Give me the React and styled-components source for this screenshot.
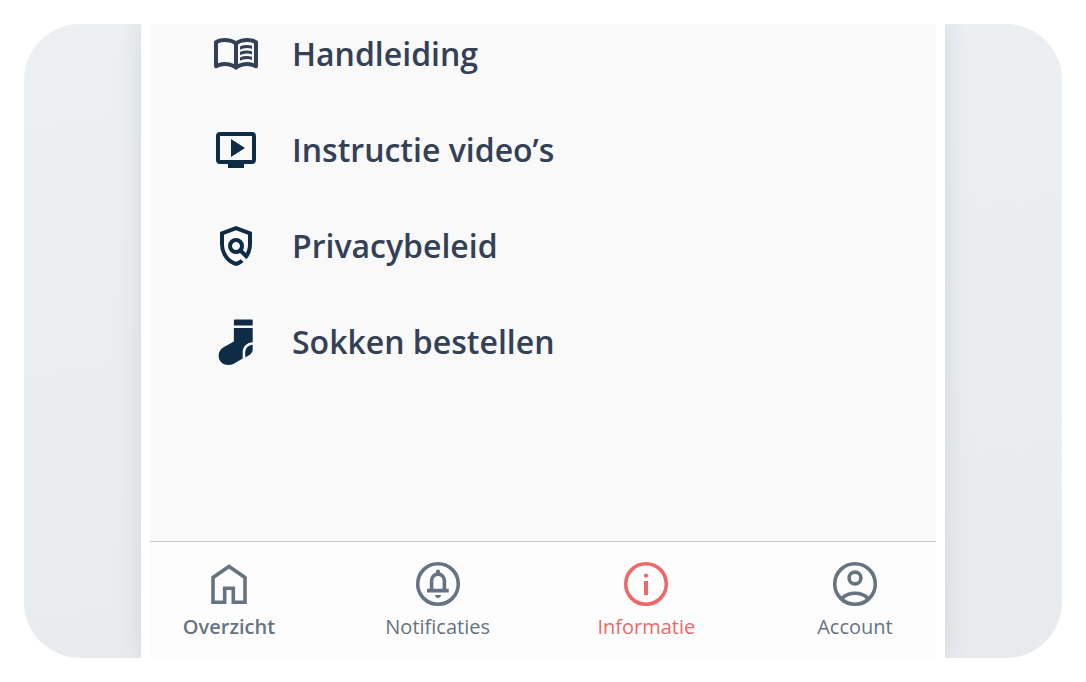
import React from 'react';
import styled, { createGlobalStyle } from 'styled-components'

const GlobalStyle = createGlobalStyle`
  * {
    box-sizing: border-box;
  }
  body {
    margin: 0;
    background: #ffffff;
    font-family: 'Open Sans', 'Noto Sans', sans-serif;
  }
`

const Page = styled.div`
  display: flex;
  min-height: 100vh;
  padding: 24px;
`

const Stage = styled.div`
  display: flex;
  flex: 1;
  padding: 0 117px;
  border-radius: 56px;
  overflow: hidden;
  background: linear-gradient(170deg, #ecf0f3, #e8ebee);
`

const Phone = styled.div`
  display: flex;
  flex-direction: column;
  flex: 1;
  padding: 0 9px;
  background: #ffffff;
  box-shadow: 0 0 24px rgba(60, 75, 90, 0.14);
`

const Menu = styled.main`
  display: flex;
  flex-direction: column;
  align-items: flex-start;
  gap: 48px;
  flex: 1;
  padding: 6px 62px;
  background: #f9f9f9;
`

const MenuLink = styled.a`
  display: flex;
  align-items: center;
  gap: 32px;
  color: #334056;
  font-size: 32px;
  font-weight: 600;
  line-height: 48px;
  text-decoration: none;
`

const TabBar = styled.nav`
  display: flex;
  justify-content: space-between;
  height: 117px;
  padding: 18px 25px 0 23px;
  border-top: 1px solid #c6c9cb;
  background: #fdfdfd;
`

const Tab = styled.a`
  display: flex;
  flex-direction: column;
  align-items: center;
  gap: 4px;
  width: 112px;
  color: ${props => props.$active ? '#ef6868' : '#667381'};
  font-size: 20px;
  font-weight: ${props => props.$strong ? 600 : 400};
  line-height: 30px;
  text-decoration: none;
`

const Icon = styled.svg`
  display: block;
  flex: none;
  width: 48px;
  height: 48px;
  fill: ${props => props.$outline ? 'none' : 'currentColor'};
  stroke: ${props => props.$outline ? 'currentColor' : 'none'};
  stroke-width: 3.6;
  color: ${props => props.$color || 'inherit'};
`

const navy = '#0f2c46'

const BookIcon = () => (
  <Icon viewBox="0 -960 960 960" aria-hidden="true">
    <path d="M560-564v-68q33-14 67.5-21t72.5-7q26 0 51 4t49 10v64q-24-9-48.5-13.5T700-600q-38 0-73 9.5T560-564Zm0 220v-68q33-14 67.5-21t72.5-7q26 0 51 4t49 10v64q-24-9-48.5-13.5T700-380q-38 0-73 9t-67 27Zm0-110v-68q33-14 67.5-21t72.5-7q26 0 51 4t49 10v64q-24-9-48.5-13.5T700-490q-38 0-73 9.5T560-454ZM260-320q47 0 91.5 10.5T440-278v-394q-41-24-87-36t-93-12q-36 0-71.5 7T120-692v396q35-12 69.5-18t70.5-6Zm260 42q44-21 88.5-31.5T700-320q36 0 70.5 6t69.5 18v-396q-33-14-68.5-21t-71.5-7q-47 0-93 12t-87 36v394Zm-40 118q-48-38-104-59t-116-21q-42 0-82.5 11T100-198q-21 11-40.5-1T40-234v-482q0-11 5.5-21T62-752q46-24 96-36t102-12q58 0 113.5 15T480-740q51-30 106.5-45T700-800q52 0 102 12t96 36q11 5 16.5 15t5.5 21v482q0 23-19.5 35t-40.5 1q-37-20-77.5-31T700-240q-60 0-116 21t-104 59Z" />
  </Icon>
)

const VideoIcon = () => (
  <Icon viewBox="0 0 48 48" $color={navy} aria-hidden="true">
    <path fillRule="evenodd" d="M8 6h32a4 4 0 0 1 4 4v24a4 4 0 0 1-4 4h-8v4H16v-4H8a4 4 0 0 1-4-4V10a4 4 0 0 1 4-4Zm0 4v24h32V10ZM19 13l14 9-14 9Z" />
  </Icon>
)

const PrivacyIcon = () => (
  <Icon viewBox="0 -960 960 960" $color={navy} aria-hidden="true">
    <path d="M480-80q-139-35-229.5-159.5T160-516v-244l320-120 320 120v244q0 85-29 163.5T688-214L560-342q-18 11-38.5 16.5T480-320q-66 0-113-47t-47-113q0-66 47-113t113-47q66 0 113 47t47 113q0 22-5.5 42.5T618-398l60 60q20-41 31-86t11-92v-189l-240-90-240 90v189q0 121 68 220t172 132q26-8 49.5-20.5T576-214l56 56q-33 27-71.5 47T480-80Zm0-320q33 0 56.5-23.5T560-480q0-33-23.5-56.5T480-560q-33 0-56.5 23.5T400-480q0 33 23.5 56.5T480-400Z" />
  </Icon>
)

const SockIcon = () => (
  <Icon viewBox="0 0 48 48" $color={navy} aria-hidden="true">
    <path d="M23 1.5h16.6a1.1 1.1 0 0 1 1.1 1.1v4.8H21.9V2.6A1.1 1.1 0 0 1 23 1.5Z" />
    <path d="M21.9 10h18.8v14.3c-5.7.3-10 4.2-10 9.7v6.5l-9.4 5.4C15.800 48.800 6.600 46.300 6.600 37.600c0-4 2.200-6.700 5.400-8.500l9.900-5.600Z" />
    <path d="M40.700 26.700v4.800c0 3.200-2.600 5.700-7.500 7.700v-4.700c0-4.500 3.200-7.500 7.500-7.800Z" />
  </Icon>
)

const HomeIcon = () => (
  <Icon viewBox="0 0 48 48" $outline aria-hidden="true">
    <path d="M8 42.200V17.500L24 6.400l16 11.100v24.700H28.300V28.300h-8.600v13.900Z" />
  </Icon>
)

const BellIcon = () => (
  <Icon viewBox="0 0 48 48" $outline aria-hidden="true">
    <circle cx="24" cy="24" r="20.3" />
    <path d="M13 30.600h21.800M17.600 30.700V20.500a6.400 6.400 0 0 1 12.800 0v10.200" />
    <path d="M22 14v-2.600a2 2 0 0 1 4 0V14ZM20.900 35h6.200c-.4 2-1.500 3-3.100 3s-2.700-1-3.100-3Z" fill="currentColor" stroke="none" />
  </Icon>
)

const InfoIcon = () => (
  <Icon viewBox="0 0 48 48" $outline aria-hidden="true">
    <circle cx="24" cy="24" r="20.3" />
    <circle cx="24" cy="15.700" r="2.100" fill="currentColor" stroke="none" />
    <path d="M24 21v14" strokeWidth="4" />
  </Icon>
)

const AccountIcon = () => (
  <Icon viewBox="0 0 48 48" $outline aria-hidden="true">
    <circle cx="24" cy="24" r="20.3" />
    <circle cx="24" cy="18" r="5.900" />
    <path d="M10.500 38.700C14 35.200 18.500 33.300 24 33.300s10 1.900 13.500 5.400" />
  </Icon>
)

const menuItems = [
  { label: 'Handleiding', icon: <BookIcon /> },
  { label: 'Instructie video’s', icon: <VideoIcon /> },
  { label: 'Privacybeleid', icon: <PrivacyIcon /> },
  { label: 'Sokken bestellen', icon: <SockIcon /> },
]

const tabs = [
  { label: 'Overzicht', icon: <HomeIcon />, strong: true },
  { label: 'Notificaties', icon: <BellIcon /> },
  { label: 'Informatie', icon: <InfoIcon />, active: true },
  { label: 'Account', icon: <AccountIcon /> },
]

function App() {
return (
<>
  <GlobalStyle />
  <Page>
    <Stage>
      <Phone>
        <Menu>
          {menuItems.map(item => (
            <MenuLink key={item.label} href="#">
              {item.icon}
              <span>{item.label}</span>
            </MenuLink>
          ))}
        </Menu>
        <TabBar>
          {tabs.map(tab => (
            <Tab
              key={tab.label}
              href="#"
              $active={tab.active}
              $strong={tab.strong}
              aria-current={tab.active ? 'page' : undefined}>
              {tab.icon}
              <span>{tab.label}</span>
            </Tab>
          ))}
        </TabBar>
      </Phone>
    </Stage>
  </Page>
</>
)
}
export default App
